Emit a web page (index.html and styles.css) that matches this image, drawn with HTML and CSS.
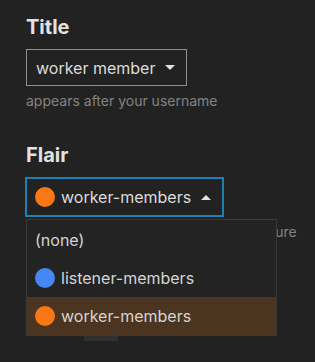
FILE: index.html
```html
<!DOCTYPE html>
<html lang="en">
<head>
    <meta charset="UTF-8">
    <meta name="viewport" content="width=device-width, initial-scale=1.0">
    <title>Member Settings</title>
    <link rel="stylesheet" href="styles.css">
</head>
<body>
    <div class="settings">
        <div class="field">
            <h2 class="field-label">Title</h2>
            <div class="select">
                <span class="select-text">worker member</span>
                <span class="caret"></span>
            </div>
            <p class="hint">appears after your username</p>
        </div>

        <div class="field">
            <h2 class="field-label">Flair</h2>
            <div class="select-wrap">
                <div class="select open">
                    <span class="dot orange"></span>
                    <span class="select-text">worker-members</span>
                    <span class="caret up"></span>
                </div>
                <ul class="menu">
                    <li class="menu-item">(none)</li>
                    <li class="menu-item"><span class="dot blue"></span>listener-members</li>
                    <li class="menu-item selected"><span class="dot orange"></span>worker-members</li>
                </ul>
            </div>
            <p class="hint">colored tag shown next to your signature</p>
        </div>

        <div class="actions">
            <button class="save">Save</button>
        </div>
    </div>
</body>
</html>
```

FILE: styles.css
```css
body {
    font-family: Inter, "Noto Sans", sans-serif;
    background-color: #222;
    color: #d7d7d7;
    margin: 0;
    min-height: 100vh;
}

.settings {
    padding: 14px 26px 22px 26px;
}

.field {
    margin-bottom: 32px;
}

.field-label {
    font-size: 20px;
    font-weight: 700;
    line-height: 26px;
    color: #e2e2e2;
    margin: 0 0 9px 0;
}

.select-wrap {
    position: relative;
    width: fit-content;
}

.select {
    display: inline-flex;
    align-items: center;
    height: 37px;
    box-sizing: border-box;
    padding: 0 11px 0 9px;
    border: 1px solid #8f8f8f;
    font-size: 16px;
    color: #dcdcdc;
}

.select.open {
    height: 40px;
    margin-left: -1px;
    padding: 0 11px 0 8px;
    border: 2px solid #1b80b3;
}

.caret {
    width: 0;
    height: 0;
    margin-left: 10px;
    border-left: 5px solid transparent;
    border-right: 5px solid transparent;
    border-top: 5px solid #e0e0e0;
}

.caret.up {
    border-top: none;
    border-bottom: 5px solid #e0e0e0;
}

.dot {
    display: inline-block;
    width: 20px;
    height: 20px;
    border-radius: 50%;
    margin-right: 6px;
    flex-shrink: 0;
}

.dot.orange {
    background-color: #f97714;
}

.dot.blue {
    background-color: #4588f5;
}

.hint {
    font-size: 14px;
    line-height: 18px;
    color: #828282;
    margin: 6px 0 0 0;
    white-space: nowrap;
}

.menu {
    position: absolute;
    top: 42px;
    left: 0;
    width: 251px;
    box-sizing: border-box;
    margin: 0;
    padding: 1px 0 0 0;
    list-style: none;
    background-color: #232323;
    border: 1px solid #393939;
    z-index: 2;
}

.menu-item {
    display: flex;
    align-items: center;
    height: 38px;
    padding: 0 8px;
    font-size: 16px;
    color: #d4d4d4;
}

.menu-item.selected {
    background-color: #4b3420;
}

.actions {
    margin-top: 70px;
    padding: 0 0 0 58px;
}

.save {
    display: block;
    width: 34px;
    height: 30px;
    border: none;
    background-color: #303030;
    color: #303030;
    font-size: 1px;
}
```
